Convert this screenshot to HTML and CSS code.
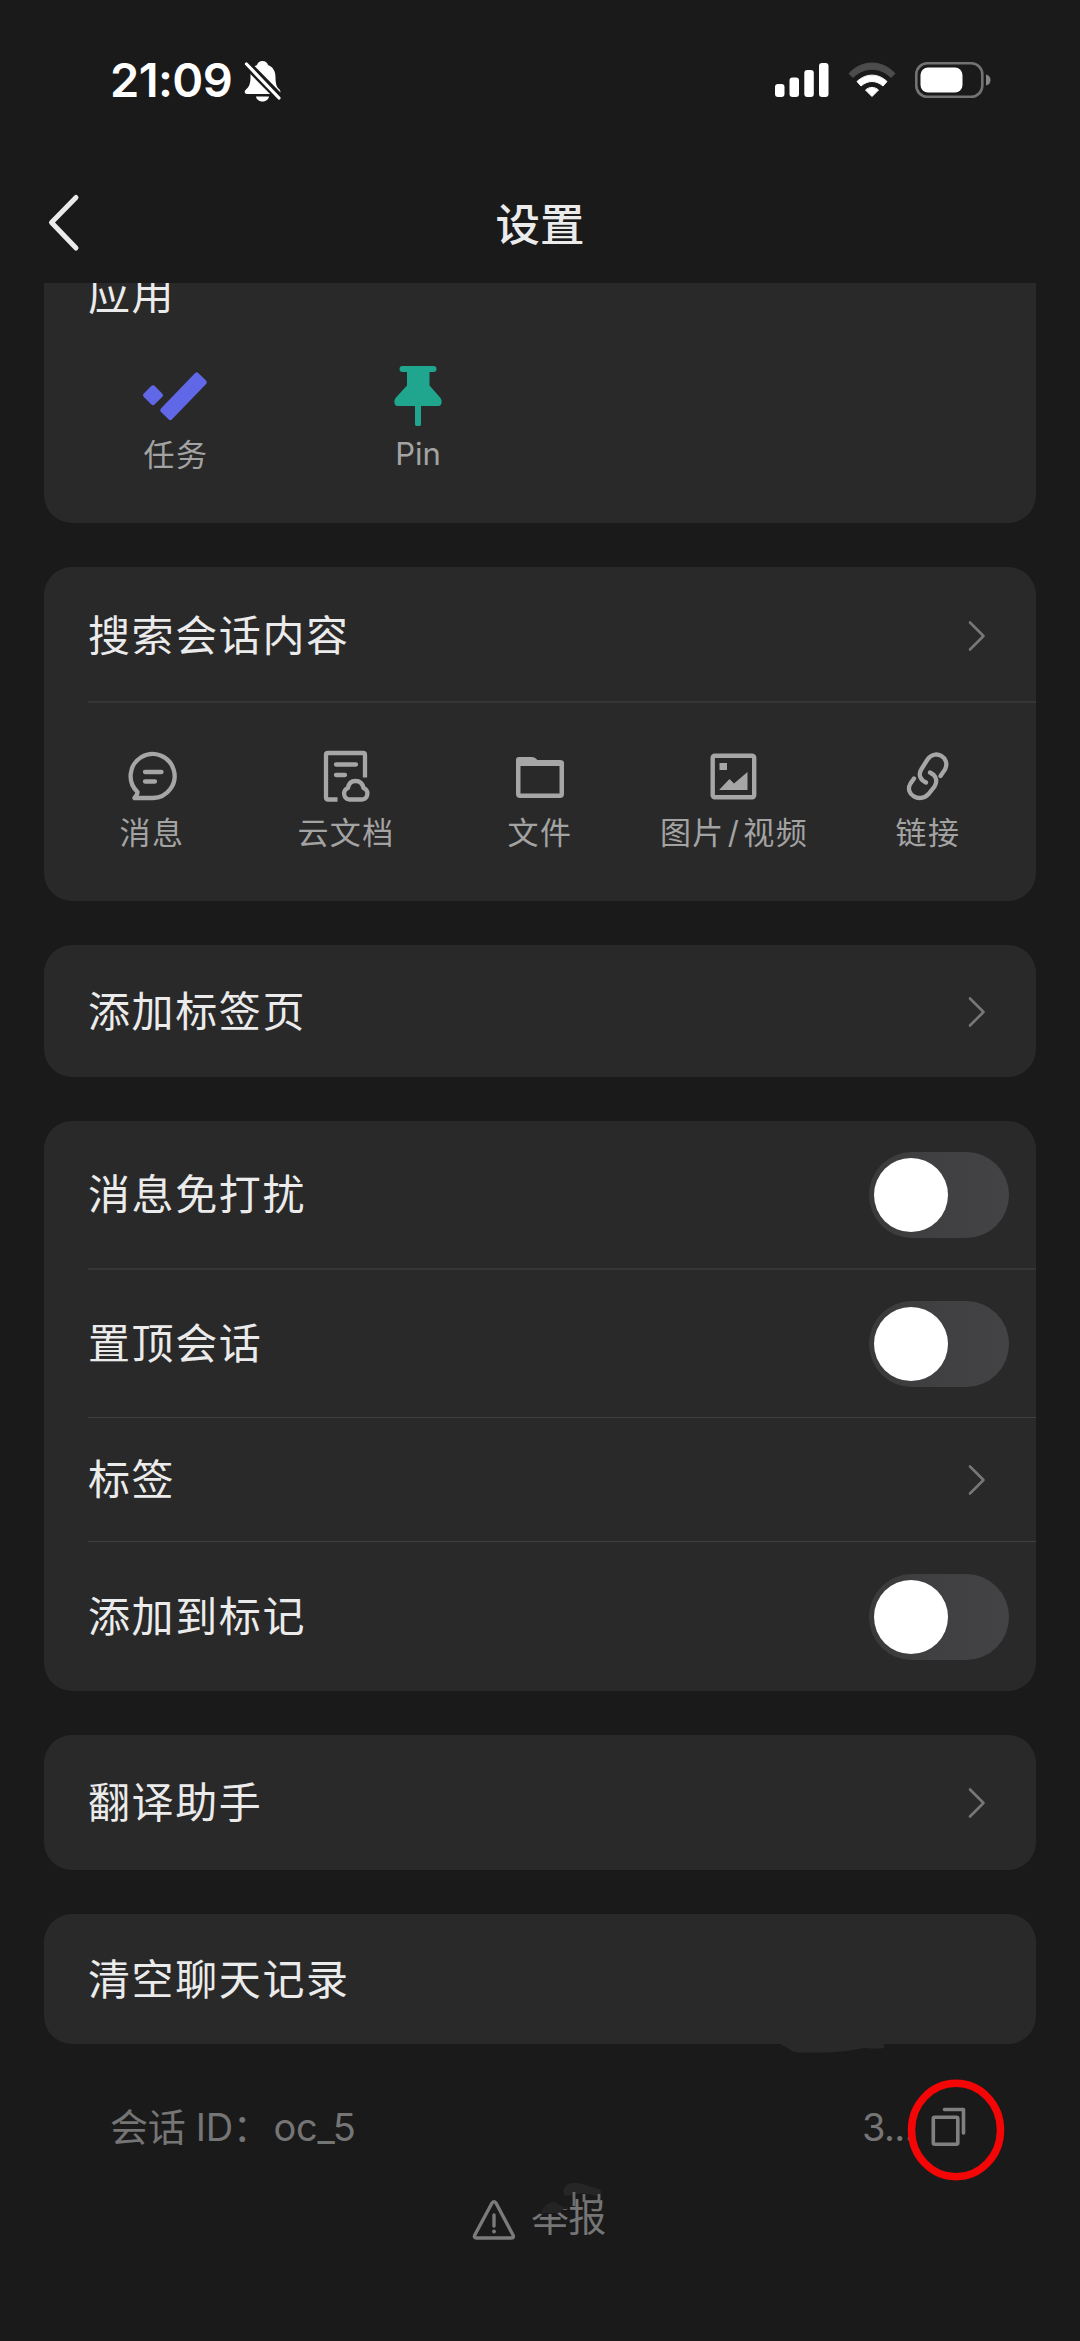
FILE: index.html
```html
<!DOCTYPE html>
<html lang="zh-CN">
<head>
<meta charset="utf-8">
<title>设置</title>
<link rel="stylesheet" href="styles.css">
</head>
<body>
<svg class="defs" width="0" height="0" aria-hidden="true">
  <symbol id="chevron" viewBox="0 0 18 32"><path d="M2 2.500 15.500 16 2 29.500" fill="none" stroke="currentColor" stroke-width="2.600" stroke-linecap="round" stroke-linejoin="round"/></symbol>
</svg>
<div class="screen">
  <header class="status">
    <div class="clock">
      <span class="time">21:09</span>
      <svg class="bell" width="38" height="42" viewBox="0 0 38 42">
        <path d="M18.500 1c-3 0-5 2-5.500 4C8 7 6.500 12 6.500 17c0 7-1.500 10-4.500 12.500C-.5 32 1 34 3 34h31c2 0 3.500-2 1.500-4.500C32.500 27 31.500 24 31.500 17c0-5-2-10-7.500-12-.500-2-2.500-4-5.500-4ZM12 36.500h13c-.5 3.500-3.500 5-6.500 5s-6-1.500-6.500-5Z" fill="#fff"/>
        <path d="M2 3.500 36 38" stroke="#1a1a1a" stroke-width="8.500"/>
        <path d="M2.500 4 35 38" stroke="#fff" stroke-width="3.200" stroke-linecap="round"/>
      </svg>
    </div>
    <div class="indicators">
      <svg width="54" height="36" viewBox="0 0 54 36" fill="#fff">
        <rect x="0" y="22" width="9.500" height="13" rx="3"/><rect x="14.500" y="15.500" width="9.500" height="19.500" rx="3"/><rect x="29.300" y="8" width="9.500" height="27" rx="3"/><rect x="44" y="1" width="9.500" height="34" rx="3"/>
      </svg>
      <svg width="48" height="36" viewBox="0 0 48 36">
        <path d="M1 11.500C14-2.500 34-2.500 47 11.500L43 15.500C32 4.500 16 4.500 5 15.500Z" fill="#4c4c4c" stroke="#4c4c4c" stroke-linejoin="round"/>
        <path d="M9 19.500c9-8.500 21-8.500 30 0l-4 4.500c-7-6-15-6-22 0Z" fill="#fff" stroke="#fff" stroke-linejoin="round"/>
        <path d="M17.500 28c4-3.500 9-3.500 13 0L24 34.500Z" fill="#fff" stroke="#fff" stroke-linejoin="round"/>
      </svg>
      <svg width="76" height="36" viewBox="0 0 76 36">
        <rect x="1.300" y="1.300" width="66" height="33.400" rx="11" fill="none" stroke="#737373" stroke-width="2.600"/>
        <rect x="5.500" y="5.500" width="42" height="25" rx="7.500" fill="#fff"/>
        <path d="M71 12.500q4.500 1 4.500 5.500t-4.500 5.500Z" fill="#858585"/>
      </svg>
    </div>
  </header>

  <nav class="navbar">
    <svg class="back" width="34" height="60" viewBox="0 0 34 60"><path d="M28 4.500 3.500 29.500 28 55" fill="none" stroke="#ebebeb" stroke-width="5" stroke-linecap="round" stroke-linejoin="round"/></svg>
    <h1 class="title">设置</h1>
    <span></span>
  </nav>

  <main class="content">
    <section class="card apps">
      <h2 class="apps-title">应用</h2>
      <div class="apps-row">
        <div class="app">
          <svg width="66" height="60" viewBox="0 0 66 60" fill="#6168e8">
            <g transform="translate(-2 6)">
            <rect x="4.300" y="15.500" width="15.400" height="15.400" rx="2.500" transform="rotate(45 12 23.200)"/>
            <rect x="14.500" y="17" width="54" height="15.500" rx="2.500" transform="rotate(-46 42 24.700) translate(1.200 0)"/>
            </g>
          </svg>
          <span class="label">任务</span>
        </div>
        <div class="app">
          <svg width="48" height="60" viewBox="0 0 48 60" fill="#20a58f">
            <path d="M8.500 0h31q3 0 3 3t-3 3H35.500V19.500L46.500 32q1.500 2 1 5t-3 3H27v18q0 2.500-3 2.500T21 58V40H3.500q-2.500 0-3-3t1-5L13 19.500V6H8.500q-3 0-3-3t3-3Z"/>
          </svg>
          <span class="label label-pin">Pin</span>
        </div>
      </div>
    </section>

    <section class="card">
      <div class="row row-search"><span>搜索会话内容</span><svg class="chevron"><use href="#chevron"/></svg></div>
      <div class="filters">
        <div class="filter">
          <svg width="52" height="52" viewBox="0 0 52 52" fill="none" stroke="#a6a6a6" stroke-width="4.300" stroke-linecap="round" stroke-linejoin="round"><path d="M8.500 48H27A22 22 0 1 0 11.500 42Q11.500 44.500 8.500 48ZM19 22H35.500M19 31.500H29"/></svg>
          <span class="label">消息</span>
        </div>
        <div class="filter">
          <svg width="52" height="52" viewBox="0 0 52 52" fill="none" stroke="#a6a6a6" stroke-width="4.300" stroke-linejoin="round"><path d="M17.500 49.500H8Q6 49.500 6 47.500V5Q6 3 8 3H43Q45 3 45 5V27.500"/><path d="M16 14.500H36M16 25H25" stroke-linecap="round"/><path d="M29 49.500A6 6 0 0 1 28 38Q29 31 35.500 31T43.500 38A6 6 0 0 1 42.500 49.500Z"/></svg>
          <span class="label">云文档</span>
        </div>
        <div class="filter">
          <svg width="52" height="52" viewBox="0 0 52 52"><path fill="#a6a6a6" fill-rule="evenodd" d="M5 7H18Q21 7 23.500 10H46Q50 10 50 13V44Q50 48 46 48H6Q2 48 2 44V10Q2 7 5 7ZM6.500 16V43.500H45.500V16Z"/></svg>
          <span class="label">文件</span>
        </div>
        <div class="filter">
          <svg width="52" height="52" viewBox="0 0 52 52"><rect x="4.700" y="5.700" width="41.500" height="41.500" rx="2" fill="none" stroke="#a6a6a6" stroke-width="4.400"/><path fill="#a6a6a6" d="M11.500 13h7.500v7h-7.500ZM11.500 39.500 21.500 29 26 33.500 39.500 22V40H11.500Z"/></svg>
          <span class="label">图片<span class="slash">/</span>视频</span>
        </div>
        <div class="filter">
          <svg width="52" height="52" viewBox="0 0 52 52" fill="none" stroke="#a6a6a6" stroke-width="4.300" stroke-linecap="round"><path d="M25 33C19 30 17 25 20.500 19.500L26.500 10C34-1 50 8 44 20L39.500 26.500M29 23C35 26 37 31 33.500 37L27.500 44.500C19 54 3 45 9.500 34L13 29" transform="translate(-1 -.5)"/></svg>
          <span class="label">链接</span>
        </div>
      </div>
    </section>

    <section class="card">
      <div class="row row-tabs"><span>添加标签页</span><svg class="chevron"><use href="#chevron"/></svg></div>
    </section>

    <section class="card">
      <div class="row row-toggle"><span>消息免打扰</span><span class="switch"><i class="knob"></i></span></div>
      <div class="row row-toggle row-pin"><span>置顶会话</span><span class="switch"><i class="knob"></i></span></div>
      <div class="row row-tag"><span>标签</span><svg class="chevron"><use href="#chevron"/></svg></div>
      <div class="row row-toggle row-last"><span>添加到标记</span><span class="switch"><i class="knob"></i></span></div>
    </section>

    <section class="card">
      <div class="row row-translate"><span>翻译助手</span><svg class="chevron"><use href="#chevron"/></svg></div>
    </section>

    <section class="card card-clear">
      <div class="row row-clear"><span>清空聊天记录</span></div>
      <svg class="card-drip" width="104" height="9" viewBox="0 0 104 9"><path d="M0 0H104V4Q98 5 84 4 66 8 48 8.500H18Q12 8 8 4Z" fill="#292929"/></svg>
    </section>

    <footer class="footer">
      <div class="chat-id">
        <span class="id-start">会话 ID：<span class="id-code">oc_5</span></span>
        <span class="id-end">3...</span>
        <span class="copy">
          <svg width="36" height="40" viewBox="0 0 36 40" fill="none" stroke="#808080" stroke-width="3.600" stroke-linejoin="round"><rect x="2.300" y="10.300" width="24.500" height="27" rx="1.500"/><path d="M13.500 2.500H32.500V26" stroke-linecap="round"/></svg>
          <svg class="ring" width="98" height="102" viewBox="0 0 98 102"><ellipse cx="49" cy="51" rx="44.500" ry="46.700" fill="none" stroke="#f40606" stroke-width="7.500"/></svg>
        </span>
      </div>
      <div class="report">
        <svg class="warning" width="44" height="42" viewBox="0 0 44 42" fill="none" stroke="#7b7b7b" stroke-width="3.400" stroke-linejoin="round" stroke-linecap="round"><path d="M20 4 2.800 36Q1.500 39 4.500 39H39Q42.500 39 41 36L24 4Q22 1.500 20 4ZM22 16V27"/><path d="M22 32.500v.1" stroke-width="3.800"/></svg>
        <span class="report-text">举报
          <svg class="smudge" width="80" height="60" viewBox="0 0 80 60"><path d="M0 4H36V27L30 27 24 32H10L7 31 5 33H0Z" fill="#1a1a1a"/><path d="M10 31Q14 20 24 20L34 26 28 31Z" fill="#242424"/><path d="M32 10Q34-1 48 1L68 7Q74 12 66 14L52 11 34 14Z" fill="#262626"/><path d="M43 10V24M53 12V20M68 12V17Q68 20 62 20" fill="none" stroke="#6d6d6d" stroke-width="2.800"/></svg>
        </span>
      </div>
    </footer>
  </main>
</div>
</body>
</html>
```
FILE: styles.css
```css
* { box-sizing: border-box; }
body { margin: 0; background: #1a1a1a; }
svg { display: block; flex: none; }
.defs { position: absolute; }

.screen {
  width: 1080px;
  height: 2341px;
  overflow: hidden;
  display: flex;
  flex-direction: column;
  background: #1a1a1a;
  color: #ebebeb;
  font-family: Inter, "Noto Sans CJK SC", sans-serif;
}

/* status bar */
.status {
  height: 160px;
  padding: 0 89px 0 110px;
  display: flex;
  align-items: center;
  justify-content: space-between;
}
.clock { display: flex; align-items: center; gap: 12px; color: #fff; }
.time { font-size: 47px; font-weight: 600; line-height: 60px; letter-spacing: -0.6px; }
.bell { margin-top: 2px; }
.indicators { display: flex; align-items: center; gap: 19px; }

/* title bar */
.navbar {
  height: 123px;
  padding: 3px 48px 0;
  display: grid;
  grid-template-columns: 1fr auto 1fr;
  align-items: start;
}
.back { margin-top: 30px; }
.title { margin: 30px 0 0; font-size: 44.500px; line-height: 64px; font-weight: 500; }

/* cards */
.content {
  flex: 1;
  display: flex;
  flex-direction: column;
  gap: 44px;
  padding: 0 44px;
  overflow: hidden;
}
.card { flex: none; background: #292929; border-radius: 28px; }

.apps { height: 240px; border-radius: 0 0 28px 28px; overflow: hidden; }
.apps-title { margin: -20px 0 0 44px; font-size: 42px; font-weight: 400; line-height: 64px; letter-spacing: 1.5px; }
.apps-row { display: flex; padding: 39px 0 0 11px; }
.app { width: 242px; display: flex; flex-direction: column; align-items: center; gap: 3px; }
.label { font-size: 31px; line-height: 52px; letter-spacing: 1.4px; color: #a3a3a3; white-space: nowrap; }
.label-pin { letter-spacing: 0; line-height: 50px; }
.slash { margin: 0 3px 0 3px; }

.row {
  margin-left: 44px;
  padding-right: 50px;
  display: flex;
  align-items: center;
  justify-content: space-between;
  font-size: 42px;
  line-height: 64px;
  letter-spacing: 1.6px;
}
.chevron { width: 18px; height: 32px; color: #777; }
.row-search { height: 136px; padding-top: 3px; border-bottom: 2px solid #363636; }
.row-tabs { height: 132px; padding-top: 1px; }
.row-toggle { height: 149px; padding-right: 27px; border-bottom: 2px solid #363636; }
.row-pin { height: 148px; border-bottom: 1px solid #404040; }
.row-tag { height: 124px; padding-top: 1px; border-bottom: 1px solid #404040; }
.row-last { height: 149px; border-bottom: 0; }
.row-translate { height: 135px; padding-top: 1px; }
.row-clear { height: 130px; padding-top: 2px; }

.filters { height: 198px; padding: 47px 11px 0; display: grid; grid-template-columns: repeat(5, 1fr); }
.filter { display: flex; flex-direction: column; align-items: center; gap: 5px; }

.switch { width: 140px; height: 86px; padding: 6px 5px; border-radius: 43px; background: linear-gradient(90deg, #3a3a3b 0%, #404042 45%, #434346 100%); }
.knob { display: block; width: 74px; height: 74px; border-radius: 50%; background: #fff; }

.card-clear { position: relative; }
.card-drip { position: absolute; left: 736px; top: 130px; }

/* footer */
.footer { padding: 1px 0 0 66px; color: #757575; font-size: 38px; }
.chat-id { height: 76px; display: flex; align-items: center; }
.id-start { width: 248px; white-space: nowrap; line-height: 60px; letter-spacing: -0.3px; }
.id-code { margin-left: 3px; }
.id-end { margin-left: 504px; width: 48px; line-height: 60px; letter-spacing: -0.6px; }
.copy { position: relative; margin-left: 21px; }
.ring { position: absolute; left: -24px; top: -28px; }
.report { display: flex; align-items: center; gap: 15px; margin: 20px 0 0 362px; height: 64px; }
.warning { margin-top: 5px; }
.report-text { position: relative; line-height: 60px; letter-spacing: -0.8px; }
.smudge { position: absolute; left: 0; top: -5px; }
```
